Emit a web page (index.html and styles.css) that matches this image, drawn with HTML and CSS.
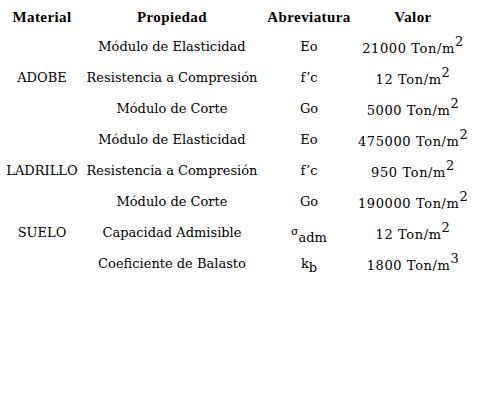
FILE: index.html
```html
<!DOCTYPE html>
<html>
<head>
<meta charset="utf-8">
<link rel="stylesheet" href="styles.css">
</head>
<body>
<div class="table">
  <div class="row head">
    <div class="c1">Material</div>
    <div class="c2">Propiedad</div>
    <div class="c3">Abreviatura</div>
    <div class="c4">Valor</div>
  </div>
  <div class="group g3">
    <div class="mat">ADOBE</div>
    <div class="rows">
      <div class="row"><div class="c2">Módulo de Elasticidad</div><div class="c3">Eo</div><div class="c4 val">21000 Ton/m<sup>2</sup></div></div>
      <div class="row"><div class="c2">Resistencia a Compresión</div><div class="c3">f’c</div><div class="c4 val">12 Ton/m<sup>2</sup></div></div>
      <div class="row"><div class="c2">Módulo de Corte</div><div class="c3">Go</div><div class="c4 val">5000 Ton/m<sup>2</sup></div></div>
    </div>
  </div>
  <div class="group g3">
    <div class="mat">LADRILLO</div>
    <div class="rows">
      <div class="row"><div class="c2">Módulo de Elasticidad</div><div class="c3">Eo</div><div class="c4 val">475000 Ton/m<sup>2</sup></div></div>
      <div class="row"><div class="c2">Resistencia a Compresión</div><div class="c3">f’c</div><div class="c4 val">950 Ton/m<sup>2</sup></div></div>
      <div class="row"><div class="c2">Módulo de Corte</div><div class="c3">Go</div><div class="c4 val">190000 Ton/m<sup>2</sup></div></div>
    </div>
  </div>
  <div class="row">
    <div class="c1">SUELO</div>
    <div class="c2">Capacidad Admisible</div>
    <div class="c3 sym"><span class="gr">σ</span><sub>adm</sub></div>
    <div class="c4 val">12 Ton/m<sup>2</sup></div>
  </div>
  <div class="row">
    <div class="c1"></div>
    <div class="c2">Coeficiente de Balasto</div>
    <div class="c3 sym">k<sub>b</sub></div>
    <div class="c4 val">1800 Ton/m<sup>3</sup></div>
  </div>
</div>
</body>
</html>
```
FILE: styles.css
```css
html, body {
  margin: 0;
  padding: 0;
  background: #ffffff;
}
body {
  font-family: "DejaVu Serif", serif;
  font-size: 13px;
  font-weight: 300;
  color: #000000;
}
.table {
  padding-top: 3px;
  width: 470px;
}
.row {
  display: grid;
  grid-template-columns: 84px 176px 98px 110px;
  height: 31px;
  align-items: center;
  text-align: center;
  white-space: nowrap;
}
.row.head {
  height: 28px;
  font-family: "Liberation Serif", serif;
  font-weight: bold;
  font-size: 15px;
  letter-spacing: 0.4px;
}
.group {
  display: flex;
}
.mat {
  width: 84px;
  flex: none;
  display: flex;
  align-items: center;
  justify-content: center;
}
.rows {
  flex: 1;
}
.group .row {
  grid-template-columns: 176px 98px 110px;
}
.val {
  padding-top: 3px;
  letter-spacing: 0.6px;
}
.val sup {
  font-size: 13px;
  line-height: 0;
  vertical-align: 7px;
}
.sym sub {
  font-size: 13px;
  line-height: 0;
  vertical-align: -4px;
}
.gr {
  font-size: 11px;
  vertical-align: 3px;
}
```
